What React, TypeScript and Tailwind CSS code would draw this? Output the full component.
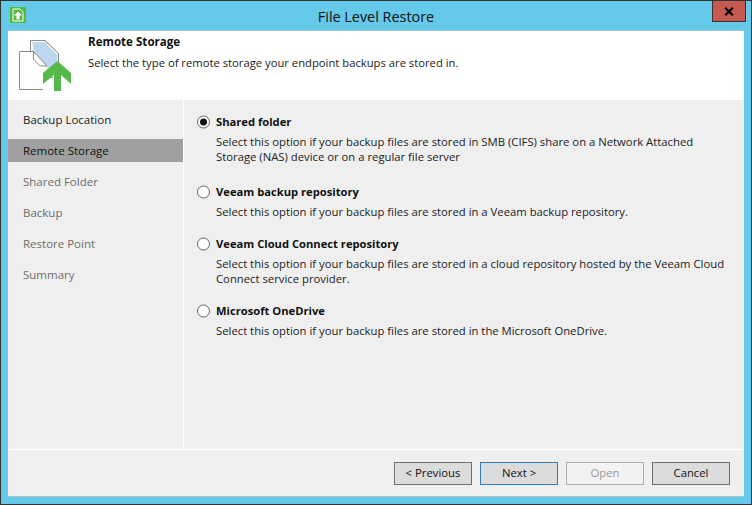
const FONT = "font-['Open_Sans','Noto_Sans',sans-serif]";

function Radio({ checked }: { checked?: boolean }) {
  return (
    <svg width="14" height="14" viewBox="0 0 14 14" className="shrink-0">
      <circle cx="6.5" cy="7" r="6" fill="#fff" stroke="#666" strokeWidth="1" />
      {checked && <circle cx="6.5" cy="7" r="3.5" fill="#111" />}
    </svg>
  );
}

function Option({ title, lines, checked, mb }: { title: string; lines: string[]; checked?: boolean; mb: string }) {
  return (
    <div className={mb}>
      <div className="flex items-center gap-[5px] h-[18px]">
        <Radio checked={checked} />
        <span className="text-[11.2px] font-bold text-[#111]">{title}</span>
      </div>
      <div className="ml-[19px] mt-[3px] text-[11.3px] leading-[15px] text-[#222]">
        {lines.map((l) => (
          <div key={l} className="whitespace-nowrap">{l}</div>
        ))}
      </div>
    </div>
  );
}

function Btn({ children, variant }: { children: string; variant?: "focus" | "disabled" }) {
  const cls =
    variant === "focus"
      ? "border-[#2f7cb8] bg-[#dcdcdc] text-[#111]"
      : variant === "disabled"
      ? "border-[#adadad] bg-[#f2f2f2] text-[#9a9a9a]"
      : "border-[#707070] bg-[#dcdcdc] text-[#111]";
  return (
    <div className={`w-[78px] h-[23px] border-[1px] flex items-center justify-center text-[11.3px] ${cls}`}>
      {children}
    </div>
  );
}

const nav = ["Backup Location", "Remote Storage", "Shared Folder", "Backup", "Restore Point", "Summary"];

export default function App() {
  return (
    <div className={`w-[752px] h-[505px] bg-[#65c9ea] border-[#333] border-[1px] flex flex-col overflow-hidden ${FONT}`}>
      <div className="h-[29px] shrink-0 flex items-center relative">
        <div className="ml-[9px] mt-[-2px] w-[16px] h-[16px] bg-[#54b948] flex items-center justify-center">
          <svg width="12" height="14" viewBox="0 0 12 14">
            <path d="M1 1 H8 L11 4 V13 H1 Z" fill="#54b948" stroke="#fff" strokeWidth="1" />
            <path d="M6 3.5 L10 7.5 H7.5 V11.5 H4.5 V7.5 H2 Z" fill="#fff" />
          </svg>
        </div>
        <div className="absolute inset-x-0 top-[6px] text-center text-[14.4px] leading-[19px] text-[#111]">File Level Restore</div>
        <div className="absolute right-[5px] top-0 w-[34px] h-[21px] bg-[#c75a50] border-[#40302e] border-l-[1px] border-r-[1px] border-b-[1px] flex items-center justify-center">
          <svg width="10" height="9" viewBox="0 0 10 9">
            <path d="M1.2 0.8 L8.8 8.2 M8.8 0.8 L1.2 8.2" stroke="#000" strokeWidth="2.2" />
          </svg>
        </div>
      </div>

      <div className="mx-[7px] h-[467px] flex flex-col bg-[#efefef] border-t-[1px] border-b-[1px] border-[#a3c6d4]">
        <div className="h-[69px] bg-white shrink-0 flex">
          <div className="w-[80px] shrink-0 pl-[10px] pt-[8px]">
            <svg width="54" height="53" viewBox="0 0 54 53">
              <path d="M14 3 H26.5 L39.5 16 V24 L30 30 L16 13 Z" fill="#bdd7ee" />
              <path d="M12.5 12 V1.5 H27 L40.5 14.5 V24" fill="none" stroke="#8a8a8a" strokeWidth="1" />
              <path d="M27 1.5 L40.5 14.5" fill="none" stroke="#8a8a8a" strokeWidth="1" strokeDasharray="1.5 1" />
              <path d="M1.5 12.5 H15.5 L29 27 V50.5 H1.5 Z" fill="#fff" />
              <path d="M25 50.5 H1.5 V12.5 H15.5 L29 27" fill="none" stroke="#8a8a8a" strokeWidth="1" />
              <path d="M15.5 12.5 V20 L22 27 H29" fill="none" stroke="#8a8a8a" strokeWidth="1" />
              <path d="M29 38.5 H35" fill="none" stroke="#8a8a8a" strokeWidth="1" />
              <path d="M39.5 22 L53 34 V45 L43 36 V52 H36 V36 L25 45 V34 Z" fill="#54b948" />
            </svg>
          </div>
          <div className="pt-[2px]">
            <div className="text-[11.6px] font-bold leading-[18px] text-[#111]">Remote Storage</div>
            <div className="mt-[3px] text-[11.25px] leading-[18px] text-[#222]">
              Select the type of remote storage your endpoint backups are stored in.
            </div>
          </div>
        </div>

        <div className="flex flex-1 min-h-0">
          <div className="w-[175px] shrink-0 pt-[8px]">
            {nav.map((n, i) => (
              <div
                key={n}
                className={`h-[23px] mb-[8px] pl-[15px] flex items-center text-[11.5px] ${
                  i === 1 ? "bg-[#a0a0a0] text-[#111]" : i === 0 ? "text-[#222]" : "text-[#6d6d6d]"
                }`}
              >
                {n}
              </div>
            ))}
          </div>
          <div className="w-[1px] bg-white shrink-0" />
          <div className="flex-1 pl-[13px] pt-[13px]">
            <Option
              checked
              title="Shared folder"
              mb="mb-[19px]"
              lines={[
                "Select this option if your backup files are stored in SMB (CIFS) share on a Network Attached",
                "Storage (NAS) device or on a regular file server",
              ]}
            />
            <Option
              title="Veeam backup repository"
              mb="mb-[16px]"
              lines={["Select this option if your backup files are stored in a Veeam backup repository."]}
            />
            <Option
              title="Veeam Cloud Connect repository"
              mb="mb-[16px]"
              lines={[
                "Select this option if your backup files are stored in a cloud repository hosted by the Veeam Cloud",
                "Connect service provider.",
              ]}
            />
            <Option
              title="Microsoft OneDrive"
              mb=""
              lines={["Select this option if your backup files are stored in the Microsoft OneDrive."]}
            />
          </div>
        </div>

        <div className="h-[47px] shrink-0 border-t-[1px] border-white flex justify-end items-start gap-[8px] pt-[12px] pr-[14px]">
          <Btn>{"< Previous"}</Btn>
          <Btn variant="focus">{"Next >"}</Btn>
          <Btn variant="disabled">Open</Btn>
          <Btn>Cancel</Btn>
        </div>
      </div>
    </div>
  );
}
